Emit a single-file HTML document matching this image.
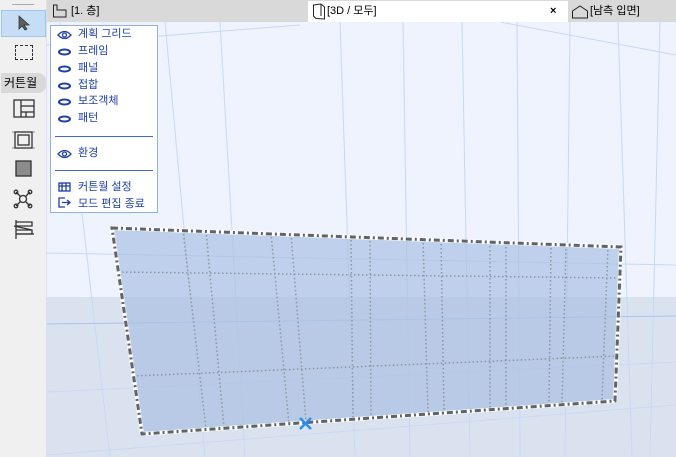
<!DOCTYPE html>
<html><head><meta charset="utf-8"><style>
*{margin:0;padding:0;box-sizing:border-box}
body{width:676px;height:457px;overflow:hidden;position:relative;background:#eef3fd;font-family:"Liberation Sans","Noto Sans CJK KR",sans-serif;font-size:11px;color:#000}
#left{position:absolute;left:0;top:0;width:47px;height:457px;background:#f0f0f0;border-right:1px solid #e0e0e0}
#tabs{position:absolute;left:47px;top:0;width:629px;height:22px;background:#d9d9d9}
.tab{position:absolute;top:1px;height:21px;line-height:21px;font-size:11px}
#menu{position:absolute;left:50px;top:25px;width:108px;height:188px;background:#fff;border:1px solid #8fb0e8}
.mi{position:absolute;left:27px;height:16px;line-height:16px;color:#1e3fa8;font-size:11px;white-space:nowrap}
.sep{position:absolute;left:4px;width:98px;height:1px;background:#3d6ad6}
</style></head><body>
<svg style="position:absolute;left:0;top:0" width="676" height="457">
<rect x="47" y="297" width="629" height="160" fill="#d9e2ee"/>
<g stroke="#c9d8f5" stroke-width="1" fill="none">
<line x1="60" y1="22" x2="110" y2="457"/><line x1="165" y1="22" x2="205" y2="457"/>
<line x1="220" y1="22" x2="245" y2="457"/><line x1="340" y1="22" x2="355" y2="457"/>
<line x1="403" y1="22" x2="410" y2="457"/><line x1="462" y1="22" x2="470" y2="457"/>
<line x1="517" y1="22" x2="520" y2="457"/><line x1="570" y1="22" x2="565" y2="457"/>
<line x1="618" y1="22" x2="632" y2="457"/><line x1="660" y1="22" x2="650" y2="457"/>
<line x1="47" y1="253" x2="676" y2="265"/><line x1="47" y1="392" x2="676" y2="362"/><line x1="47" y1="455" x2="676" y2="405"/>
<line x1="47" y1="45" x2="300" y2="25"/><line x1="500" y1="22" x2="676" y2="55"/>
</g>
<line x1="47" y1="324" x2="676" y2="316" stroke="#a9c2f0"/>
<polygon points="112,228 621,247 615,401 142,434" fill="#a9c1e3" fill-opacity="0.7"/>
<g stroke="#8e95a0" stroke-width="1.5" stroke-dasharray="1.5 2.5" fill="none">
<line x1="183" y1="230" x2="206" y2="429"/><line x1="206" y1="231" x2="224" y2="428"/>
<line x1="271" y1="233" x2="289" y2="424"/><line x1="291" y1="234" x2="306" y2="422"/>
<line x1="351" y1="236" x2="353" y2="418"/><line x1="370" y1="237" x2="371" y2="417"/>
<line x1="423" y1="239" x2="428" y2="413"/><line x1="441" y1="240" x2="444" y2="411"/>
<line x1="490" y1="242" x2="490" y2="408"/><line x1="506" y1="243" x2="506" y2="407"/>
<line x1="551" y1="244" x2="549" y2="404"/><line x1="566" y1="245" x2="562" y2="403"/>
<line x1="608" y1="246" x2="602" y2="401"/>
<line x1="118" y1="272" x2="620" y2="278"/><line x1="133" y1="376" x2="617" y2="356"/>
</g>
<polygon points="112,228 621,247 615,401 142,434" fill="none" stroke="#fff" stroke-width="4"/>
<polygon points="112,228 621,247 615,401 142,434" fill="none" stroke="#5f636a" stroke-width="3" stroke-dasharray="6 3 2 3"/>
<g stroke="#2a8ff0" stroke-width="2.5"><line x1="300" y1="418" x2="311" y2="429"/><line x1="311" y1="418" x2="300" y2="429"/></g>
</svg>
<div id="left">
<div style="position:absolute;left:12px;top:4px;width:22px;height:1px;background:#aaa"></div>
<div style="position:absolute;left:1px;top:10px;width:45px;height:27px;background:#c5def5;border:1px solid #9cc6ec"></div>
<svg style="position:absolute;left:18px;top:15px" width="14" height="16"><path d="M1 1 L1 14 L4 11 L7 15 L9 14 L6 10 L11 10 Z" fill="#5a5f66" stroke="#333" stroke-width="0.8"/></svg>
<div style="position:absolute;left:15px;top:45px;width:18px;height:15px;border:1px dashed #333"></div>
<div style="position:absolute;left:1px;top:73px;width:45px;height:20px;background:#d9d9d9;border-radius:0 8px 8px 0;line-height:20px;font-size:12px;padding-left:3px">커튼월</div>
<svg style="position:absolute;left:12px;top:98px" width="24" height="150" fill="none" stroke="#333" stroke-width="1.3">
<rect x="2" y="2" width="20" height="17"/><line x1="9" y1="2" x2="9" y2="19"/><line x1="9" y1="8" x2="22" y2="8"/><line x1="9" y1="14" x2="22" y2="14"/><line x1="14" y1="14" x2="14" y2="19"/>
<rect x="3" y="34" width="17" height="16"/><rect x="6" y="37" width="11" height="10"/><line x1="0" y1="34" x2="23" y2="34" stroke-width="0.6"/><line x1="0" y1="50" x2="23" y2="50" stroke-width="0.6"/>
<rect x="4" y="63" width="15" height="15" fill="#8c8c8c"/>
<line x1="4" y1="94" x2="18" y2="108"/><line x1="18" y1="94" x2="4" y2="108"/><circle cx="11" cy="101" r="3.5" fill="#f0f0f0"/><circle cx="4" cy="94" r="1.8"/><circle cx="18" cy="94" r="1.8"/><circle cx="4" cy="108" r="1.8"/><circle cx="18" cy="108" r="1.8"/>
<path d="M4 124 L20 124 L20 128 L4 128 Z M4 132 L20 132 L20 136 L4 136 Z M4 122 L4 141"/><path d="M2 128 L20 132 M4 136 L22 136"/>
</svg>
</div>
<div id="tabs">
<svg style="position:absolute;left:5px;top:3px" width="16" height="16" fill="none" stroke="#222"><path d="M1.5 2 L5 2 L5 7 L14 7 L14 14 L1.5 14 Z"/></svg>
<div class="tab" style="left:24px">[1. 층]</div>
<div style="position:absolute;left:261px;top:1px;width:260px;height:21px;background:#fff"></div>
<svg style="position:absolute;left:265px;top:3px" width="14" height="17" fill="none" stroke="#222"><path d="M1.5 2 L9 1 L12.5 4 L12.5 16 L4 15.5 L1.5 13 Z M9 1 L9 13 M1.5 13 L4 15.5"/></svg>
<div class="tab" style="left:280px">[3D / 모두]</div>
<div class="tab" style="left:503px;font-weight:bold">×</div>
<svg style="position:absolute;left:524px;top:4px" width="18" height="16" fill="none" stroke="#222"><path d="M1.5 7 L9 2 L16.5 7 L16.5 14 L1.5 14 Z"/></svg>
<div class="tab" style="left:543px">[남측 입면]</div>
</div>
<div id="menu">
<svg style="position:absolute;left:6px;top:0" width="16" height="186" fill="none" stroke="#1e3fa8" stroke-width="1.3">
<path d="M1 9 Q7.5 2 14 9 Q7.5 16 1 9 Z"/><circle cx="7.5" cy="9" r="2"/>
<ellipse cx="7.5" cy="26" rx="5.5" ry="2.5" stroke-width="2"/>
<ellipse cx="7.5" cy="43" rx="5.5" ry="2.5" stroke-width="2"/>
<ellipse cx="7.5" cy="60" rx="5.5" ry="2.5" stroke-width="2"/>
<ellipse cx="7.5" cy="76" rx="5.5" ry="2.5" stroke-width="2"/>
<ellipse cx="7.5" cy="93" rx="5.5" ry="2.5" stroke-width="2"/>
<path d="M1 128 Q7.5 121 14 128 Q7.5 135 1 128 Z"/><circle cx="7.5" cy="128" r="2"/>
<rect x="2" y="157" width="11" height="8"/><path d="M2 160 L13 160 M5 157 L5 165 M9 157 L9 165"/>
<path d="M8 172 L2 172 L2 181 L8 181 M5 176.5 L13 176.5 M10 174 L13 176.5 L10 179"/>
</svg>
<div class="mi" style="top:0px">계획 그리드</div>
<div class="mi" style="top:17px">프레임</div>
<div class="mi" style="top:34px">패널</div>
<div class="mi" style="top:51px">접합</div>
<div class="mi" style="top:67px">보조객체</div>
<div class="mi" style="top:84px">패턴</div>
<div class="sep" style="top:110px"></div>
<div class="mi" style="top:119px">환경</div>
<div class="sep" style="top:144px"></div>
<div class="mi" style="top:153px">커튼월 설정</div>
<div class="mi" style="top:170px">모드 편집 종료</div>
</div>
</body></html>
